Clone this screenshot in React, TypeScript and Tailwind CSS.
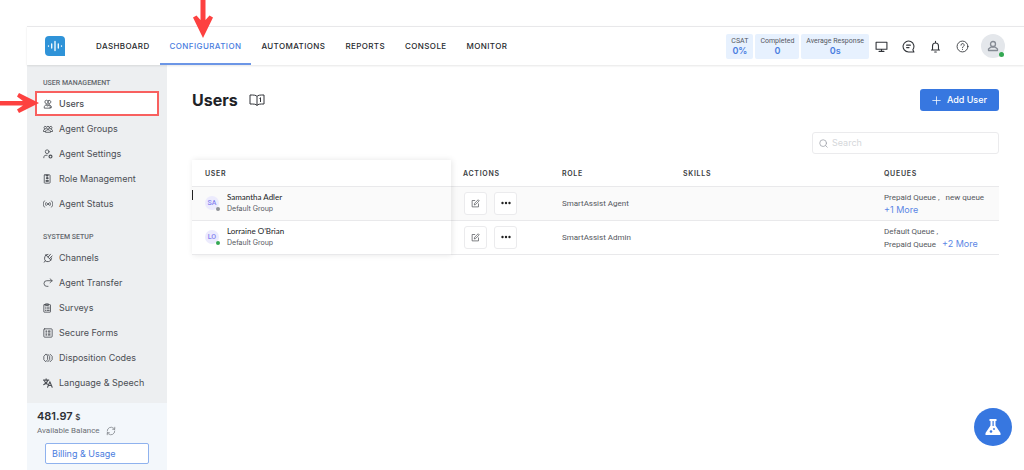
import { useState } from 'react'
import type { ReactNode } from 'react'

type IconProps = { children: ReactNode; className?: string }

function Svg({ children, className = 'size-[10px]' }: IconProps) {
  return (
    <svg
      viewBox="0 0 24 24"
      fill="none"
      stroke="currentColor"
      strokeWidth="2"
      strokeLinecap="round"
      strokeLinejoin="round"
      className={`shrink-0 ${className}`}
      aria-hidden="true"
    >
      {children}
    </svg>
  )
}

const icons = {
  users: (
    <Svg>
      <circle cx="8.500" cy="7" r="4" />
      <path d="M13 3.500a4 4 0 1 1 0 7M3 21v-2.500L6.500 14h7l4 4.500V21zM15 13.500l5 4V21h-3M8.500 14.500l2.500 3 2.500-3" />
    </Svg>
  ),
  groups: (
    <Svg>
      <circle cx="12" cy="9" r="3.500" />
      <path d="M6 19v-2l3-3h6l3 3v2zM7 6a3 3 0 1 0-1 5.500M17 6a3 3 0 1 1 1 5.500M5 12l-4 3v3h4M19 12l4 3v3h-4" />
    </Svg>
  ),
  settings: (
    <Svg>
      <circle cx="10" cy="6.500" r="4.500" />
      <path d="M2 21v-2a5 5 0 0 1 5-4h3" />
      <circle cx="18" cy="18" r="3.500" strokeWidth="2.800" />
    </Svg>
  ),
  role: (
    <Svg>
      <rect x="3" y="2" width="14" height="20" rx="1.500" />
      <path d="M8 2v3h4V2" fill="currentColor" />
      <circle cx="10" cy="10" r="2" fill="currentColor" />
      <path d="M7 17v-1.500h6V17z" fill="currentColor" />
    </Svg>
  ),
  status: (
    <Svg>
      <path d="M7.500 8a6 6 0 0 0 0 8M3.500 4.500a11 11 0 0 0 0 15M16.500 8a6 6 0 0 1 0 8M20.500 4.500a11 11 0 0 1 0 15" />
      <circle cx="12" cy="12" r="1.500" fill="currentColor" />
    </Svg>
  ),
  channels: (
    <Svg>
      <path d="M7 5l12 12c-3 4-9.500 5-13 2S3 9 7 5zM6 19l-3.500 3M7 5l5-1.500M19 17l1.500-5M12.500 9.500L18 3M16 13l6-6" strokeWidth="2.200" />
    </Svg>
  ),
  transfer: (
    <Svg>
      <path d="M17 2l5 4.500-5 4.500M22 6.500H9a6.500 6.500 0 0 0-6.500 6.500v1A6.500 6.500 0 0 0 9 20h3" />
    </Svg>
  ),
  surveys: (
    <Svg>
      <rect x="2" y="4" width="16" height="18" rx="1" />
      <path d="M7 2h6v4H7zM6 10h1M10 10h5M6 14h1M10 14h5M6 18h1M10 18h5" />
    </Svg>
  ),
  forms: (
    <Svg>
      <rect x="2" y="2" width="20" height="20" rx="2" />
      <path d="M7 7.500h2M7 12h2M7 16.500h2M13 7.500h4M13 12h4M13 16.500h4" strokeWidth="2.500" />
    </Svg>
  ),
  codes: (
    <Svg>
      <path d="M6.500 3L2 8v8l4.500 5L11 16V8zM11.500 3L16 8v8l-4.500 5M17 3l5 5v8l-5 5" />
    </Svg>
  ),
  language: (
    <Svg>
      <path d="M1 5h13M7.500 2v3M11.500 5c-1 5-5 9-10 11M4 8c1 3 4 6 7 7M11 22l5.500-13L22 22M13 18h7" strokeWidth="2.600" />
    </Svg>
  ),
}

const sections = [
  {
    title: 'USER MANAGEMENT',
    items: [
      { label: 'Users', icon: icons.users },
      { label: 'Agent Groups', icon: icons.groups },
      { label: 'Agent Settings', icon: icons.settings },
      { label: 'Role Management', icon: icons.role },
      { label: 'Agent Status', icon: icons.status },
    ],
  },
  {
    title: 'SYSTEM SETUP',
    items: [
      { label: 'Channels', icon: icons.channels },
      { label: 'Agent Transfer', icon: icons.transfer },
      { label: 'Surveys', icon: icons.surveys },
      { label: 'Secure Forms', icon: icons.forms },
      { label: 'Disposition Codes', icon: icons.codes },
      { label: 'Language & Speech', icon: icons.language },
    ],
  },
]

const tabs = ['DASHBOARD', 'CONFIGURATION', 'AUTOMATIONS', 'REPORTS', 'CONSOLE', 'MONITOR']

const stats = [
  { label: 'CSAT', value: '0%' },
  { label: 'Completed', value: '0' },
  { label: 'Average Response', value: '0s' },
]

const users = [
  {
    initials: 'SA',
    name: 'Samantha Adler',
    group: 'Default Group',
    role: 'SmartAssist Agent',
    online: false,
    queues: (
      <>
        <div>Prepaid Queue ,&nbsp;&nbsp; new queue</div>
        <a href="#" className="font-['Inter',sans-serif] text-[9px] text-[#5b86e5]">+1 More</a>
      </>
    ),
  },
  {
    initials: 'LO',
    name: 'Lorraine O’Brian',
    group: 'Default Group',
    role: 'SmartAssist Admin',
    online: true,
    queues: (
      <>
        <div>Default Queue ,</div>
        Prepaid Queue
        <a href="#" className="ml-[6px] font-['Inter',sans-serif] text-[9px] text-[#5b86e5]">+2 More</a>
      </>
    ),
  },
]

function Header() {
  return (
    <header className="z-10 flex h-[39px] shrink-0 items-center border-t border-[#e8e8ea] bg-white pr-[19px] pl-[18px] shadow-[0_1px_2px_rgba(0,0,0,0.1)]">
      <svg viewBox="0 0 20 20" className="size-5 shrink-0" aria-label="SmartAssist">
        <path d="M4 0h12a4 4 0 0 1 4 4v16H4a4 4 0 0 1-4-4V4a4 4 0 0 1 4-4z" fill="#2f93d8" />
        <path d="M3.500 9.800v.4M6.700 8v4M10 5.500v9M13.300 8v4M16.500 9.800v.4" stroke="#fff" strokeWidth="1.300" strokeLinecap="round" />
      </svg>
      <nav className="ml-[21px] flex h-full">
        {tabs.map((tab) => (
          <a
            key={tab}
            href="#"
            className={`flex items-center border-b-2 px-[10px] pt-[2px] text-[8px] font-medium tracking-wider ${
              tab === 'CONFIGURATION' ? 'border-[#6c96e6] text-[#4a7de0]' : 'border-transparent text-[#26292d]'
            }`}
          >
            {tab}
          </a>
        ))}
      </nav>
      <div className="ml-auto flex gap-[2px]">
        {stats.map((s) => (
          <div key={s.label} className="rounded-xs bg-[#e7f1fe] px-[5px] py-[3px] text-center whitespace-nowrap">
            <div className="font-['Roboto',sans-serif] text-[7px] leading-[9px] text-[#55585e]">{s.label}</div>
            <div className="text-[9px] leading-[10px] font-semibold text-[#4a7de0]">{s.value}</div>
          </div>
        ))}
      </div>
      <div className="ml-[6px] flex items-center gap-[14px] text-[#303338]">
        <button aria-label="Screen">
          <Svg className="size-[13px]">
            <path d="M2 4h20v13H2zM12 17v4M7.500 21h9" />
          </Svg>
        </button>
        <button aria-label="Chats">
          <Svg className="size-[13px]">
            <path d="M20 18a10 10 0 1 0-8 4h10zM8.500 9.500h7M8.500 14h4.500" />
          </Svg>
        </button>
        <button aria-label="Notifications">
          <Svg className="size-[13px]">
            <path d="M4.500 18.500h15M6.500 18.500V11a5.500 5.500 0 0 1 11 0v7.500M12 2.500v3M10.500 22h3" />
          </Svg>
        </button>
        <button aria-label="Help">
          <Svg className="size-[13px]">
            <circle cx="12" cy="12" r="10" strokeWidth="1.600" />
            <path d="M9.200 9.500a2.900 2.900 0 1 1 4.300 2.500c-1 .6-1.500 1.200-1.500 2.300M12 17.300v.2" strokeWidth="1.600" />
          </Svg>
        </button>
      </div>
      <button aria-label="Profile" className="relative ml-3 flex size-6 items-center justify-center rounded-full bg-[#e4e7eb] text-[#858b94]">
        <Svg className="size-3">
          <circle cx="12" cy="8" r="5" strokeWidth="2.600" />
          <path d="M3 21v-3l5-4h8l5 4v3z" strokeWidth="2.600" />
        </Svg>
        <span className="absolute right-[1px] bottom-[1px] size-[5px] rounded-full bg-[#34a853]" />
      </button>
    </header>
  )
}

function Sidebar() {
  return (
    <aside className="flex w-[140px] shrink-0 flex-col bg-[#edeff1]">
      <nav className="min-h-0 flex-1 overflow-hidden px-2 pt-3">
        {sections.map((section) => (
          <div key={section.title} className="mb-[15px]">
            <h2 className="mb-[3px] px-2 pt-px font-['Roboto',sans-serif] text-[7px] leading-[10px] font-medium text-[#63676d]">
              {section.title}
            </h2>
            {section.items.map((item) => (
              <a
                key={item.label}
                href="#"
                className={`flex h-[25px] items-center gap-[6px] px-2 text-[9px] text-[#4b4e54] ${
                  item.label === 'Users' ? 'border-2 border-[#f8605f] bg-white px-[6px] font-medium' : ''
                }`}
              >
                {item.icon}
                {item.label}
              </a>
            ))}
          </div>
        ))}
      </nav>
      <div className="shrink-0 bg-[#f3f7fb] px-[10px] pt-[6px] pb-[6px]">
        <div className="text-[11px] leading-[14px] font-semibold text-[#2d3035]">
          481.97 <span className="text-[8px] font-medium">$</span>
        </div>
        <div className="flex items-center gap-[6px] font-['Roboto',sans-serif] text-[8px] leading-[13px] text-[#6b6f75]">
          Available Balance
          <button aria-label="Refresh balance">
            <Svg className="size-[10px]">
              <path d="M3 12a9 9 0 0 1 15-6.700L21 8M21 3v5h-5M21 12a9 9 0 0 1-15 6.700L3 16M3 21v-5h5" strokeWidth="1.600" />
            </Svg>
          </button>
        </div>
        <button className="mx-2 mt-[6px] flex h-[21px] w-[104px] items-center rounded-xs border border-[#8fb2ee] bg-white px-[6px] text-[9px] text-[#4a7de0]">
          Billing &amp; Usage
        </button>
      </div>
    </aside>
  )
}

function UsersTable() {
  const th = 'px-[13px] pt-[2px] text-left text-[7px] font-semibold tracking-widest text-[#3a3d42]'
  return (
    <div className="relative mt-[6px]">
      <table className="w-full table-fixed border-collapse font-['Roboto',sans-serif] text-[8px] text-[#55585e]">
        <thead className="font-['Inter',sans-serif]">
          <tr className="h-[26px] border-b border-[#e9e9eb]">
            <th className={`w-[258px] ${th}`}>USER</th>
            <th className={`w-[99px] ${th}`}>ACTIONS</th>
            <th className={`w-[15%] ${th}`}>ROLE</th>
            <th className={th}>SKILLS</th>
            <th className={`w-[128px] ${th}`}>QUEUES</th>
          </tr>
        </thead>
        <tbody>
          {users.map((u) => (
            <tr key={u.name} className="h-[34px] border-b border-[#e9e9eb] first:bg-[#fafafa]">
              <td className="px-[13px]">
                <div className="flex items-center gap-2">
                  <span className="relative flex size-[14px] items-center justify-center rounded-full bg-[#ecebfd] text-[7px] font-medium text-[#8583f0]">
                    {u.initials}
                    <span className={`absolute -right-px -bottom-px size-1 rounded-full ${u.online ? 'bg-[#34a853]' : 'bg-[#8f9298]'}`} />
                  </span>
                  <div>
                    <div className="font-['Lato',sans-serif] leading-3 text-[#202226]">{u.name}</div>
                    <div className="font-['Inter',sans-serif] text-[7px] leading-3">{u.group}</div>
                  </div>
                </div>
              </td>
              <td className="px-[14px]">
                <div className="flex gap-[7px]">
                  <button aria-label={`Edit ${u.name}`} className="flex size-[23px] items-center justify-center rounded-[3px] border border-[#ebebed] bg-white">
                    <Svg className="size-[9px]">
                      <path d="M10 4H3v17h17v-8M9 15l1-4L19 2l3 3-9 9z" />
                    </Svg>
                  </button>
                  <button aria-label={`More actions for ${u.name}`} className="flex size-[23px] items-center justify-center rounded-[3px] border border-[#ebebed] bg-white">
                    <svg viewBox="0 0 10 4" className="h-1 w-[10px]" fill="#222" aria-hidden="true">
                      <circle cx="1.500" cy="2" r="1.200" />
                      <circle cx="5" cy="2" r="1.200" />
                      <circle cx="8.500" cy="2" r="1.200" />
                    </svg>
                  </button>
                </div>
              </td>
              <td className="px-[13px] pt-px">{u.role}</td>
              <td />
              <td className="pt-[2px] pl-[13px] leading-[12px] whitespace-nowrap">{u.queues}</td>
            </tr>
          ))}
        </tbody>
      </table>
      {/* raised edge of the pinned user column */}
      <div className="pointer-events-none absolute inset-y-0 left-0 w-[259px] shadow-[1px_0_6px_rgba(0,0,0,0.1)]" />
      <span className="absolute top-[30px] left-0 h-[10px] w-px bg-[#222]" />
    </div>
  )
}

export default function App() {
  const [query, setQuery] = useState('')

  return (
    <div className="relative flex h-screen flex-col overflow-hidden bg-white pt-[26px] pl-[27px] font-['Inter',sans-serif]">
      <Header />
      <div className="flex min-h-0 flex-1">
        <Sidebar />
        <main className="min-w-0 flex-1 pt-6 pr-[25px] pl-[25px]">
          <div className="flex h-[22px] items-center">
            <h1 className="text-[16px] font-bold text-[#202226]">Users</h1>
            <svg viewBox="0 0 16 12" className="ml-[11px] h-3 w-4 text-[#303338]" fill="none" stroke="currentColor" aria-hidden="true">
              <path d="M8 2.500C7 1 5 1 1 1v9c4 0 6 0 7 1.500C9 10 11 10 15 10V1C11 1 9 1 8 2.500zM8 2.500v9" />
              <path d="M10.500 4.500l1-.8V8" />
            </svg>
            <button className="ml-auto flex h-[22px] items-center gap-[6px] rounded-[3px] bg-[#3777e0] px-3 text-[9px] font-medium text-white">
              <Svg className="size-[9px]">
                <path d="M12 2v20M2 12h20" />
              </Svg>
              Add User
            </button>
          </div>
          <div className="mt-[21px] ml-auto flex h-[22px] w-[187px] items-center gap-1 rounded-[3px] border border-[#ebebed] px-[6px]">
            <Svg className="size-[9px] text-[#9a9ea5]">
              <circle cx="11" cy="11" r="9" />
              <path d="M18 18l4 4" />
            </Svg>
            <input
              aria-label="Search"
              placeholder="Search"
              value={query}
              onChange={(e) => setQuery(e.target.value)}
              className="min-w-0 flex-1 text-[9px] outline-none placeholder:text-[#d5d7da]"
            />
          </div>
          <UsersTable />
        </main>
      </div>

      <button aria-label="Experiments" className="absolute right-3 bottom-6 flex size-[38px] items-center justify-center rounded-full bg-[#3777e0]">
        <svg viewBox="0 0 16 16" className="size-4" aria-hidden="true">
          <path d="M4.500 0h7v2h-1v4.500l5 7.500v2H.5v-2l5-7.500V2h-1z" fill="#fff" />
          <path d="M7.500 2h1.200v5H7.500z" fill="#3777e0" />
          <circle cx="6" cy="12.500" r="1.300" fill="#3777e0" />
          <circle cx="9" cy="10" r=".9" fill="#3777e0" />
        </svg>
      </button>

      {/* callout arrows */}
      <svg viewBox="0 0 20 38" className="absolute top-0 left-[193px] z-20 h-[38px] w-5" aria-hidden="true">
        <path d="M7.500 0h5v20l4-4.500 3.500 2L10 38 0 17.500l3.500-2 4 4.500z" fill="#fd4140" />
      </svg>
      <svg viewBox="0 0 39 20" className="absolute top-[93px] left-0 z-20 h-5 w-[39px]" aria-hidden="true">
        <path d="M0 8h23l-6-4.500L19 0l20 10-20 10-2-3.500 6-4H0z" fill="#fd4140" />
      </svg>
    </div>
  )
}
